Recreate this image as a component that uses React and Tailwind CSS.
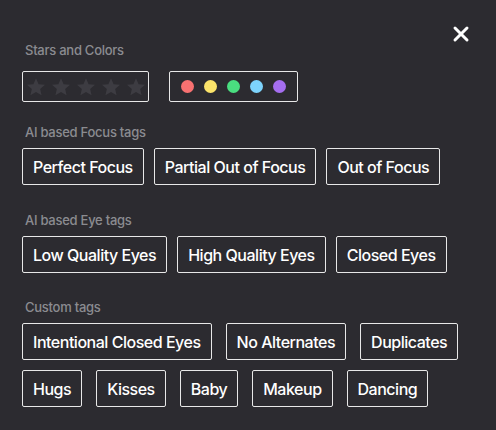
import { X } from 'lucide-react'

const FOCUS_TAGS = ['Perfect Focus', 'Partial Out of Focus', 'Out of Focus']
const EYE_TAGS = ['Low Quality Eyes', 'High Quality Eyes', 'Closed Eyes']
const CUSTOM_TAGS = ['Intentional Closed Eyes', 'No Alternates', 'Duplicates', 'Hugs', 'Kisses', 'Baby', 'Makeup', 'Dancing']
const COLORS = ['bg-[#f87171]', 'bg-[#fbe36a]', 'bg-[#4ade80]', 'bg-[#7dd3fc]', 'bg-[#a56ef0]']

function Star() {
  return (
    <svg width="20" height="20" viewBox="0 0 24 24" className="fill-[#3d3c42]">
      <path d="M12 1.5l3.1 7.1 7.7.7-5.8 5.1 1.7 7.6L12 18l-6.7 4 1.7-7.6-5.8-5.1 7.7-.7z" />
    </svg>
  )
}

function SectionTitle({ children }) {
  return <p className="ml-[3px] text-[13px] leading-4 text-[#8b8b90] tracking-[-0.02em]">{children}</p>
}

function Tag({ label }) {
  return (
    <button className="h-[37px] px-[10px] flex items-center border border-[#e8e8e8] rounded-[2px] text-[16px] text-white tracking-[-0.03em]">
      {label}
    </button>
  )
}

export default function App() {
  return (
    <div className="relative w-[496px] h-[430px] bg-[#2c2b30] pl-[22px] pt-[42px] font-['Inter',sans-serif] font-medium">
      <button className="absolute top-[22px] right-[23px] text-white">
        <X size={24} strokeWidth={3} />
      </button>

      <SectionTitle>Stars and Colors</SectionTitle>
      <div className="flex gap-[20px] mt-[13px]">
        <div className="h-[31px] w-[127px] border border-[#e8e8e8] rounded-[2px] flex items-center pl-[3px] gap-[5px]">
          {[0, 1, 2, 3, 4].map(i => <Star key={i} />)}
        </div>
        <div className="h-[31px] w-[129px] border border-[#e8e8e8] rounded-[2px] flex items-center pl-[11px] gap-[10px]">
          {COLORS.map(c => <span key={c} className={`w-[13px] h-[13px] rounded-full ${c}`} />)}
        </div>
      </div>

      <div className="mt-[22px]">
        <SectionTitle>AI based Focus tags</SectionTitle>
        <div className="flex gap-[10px] mt-[8px]">
          {FOCUS_TAGS.map(t => <Tag key={t} label={t} />)}
        </div>
      </div>

      <div className="mt-[27px]">
        <SectionTitle>AI based Eye tags</SectionTitle>
        <div className="flex gap-[10px] mt-[8px]">
          {EYE_TAGS.map(t => <Tag key={t} label={t} />)}
        </div>
      </div>

      <div className="mt-[26px]">
        <SectionTitle>Custom tags</SectionTitle>
        <div className="flex flex-wrap gap-x-[14px] gap-y-[10px] mt-[8px] w-[450px]">
          {CUSTOM_TAGS.map(t => <Tag key={t} label={t} />)}
        </div>
      </div>
    </div>
  )
}
